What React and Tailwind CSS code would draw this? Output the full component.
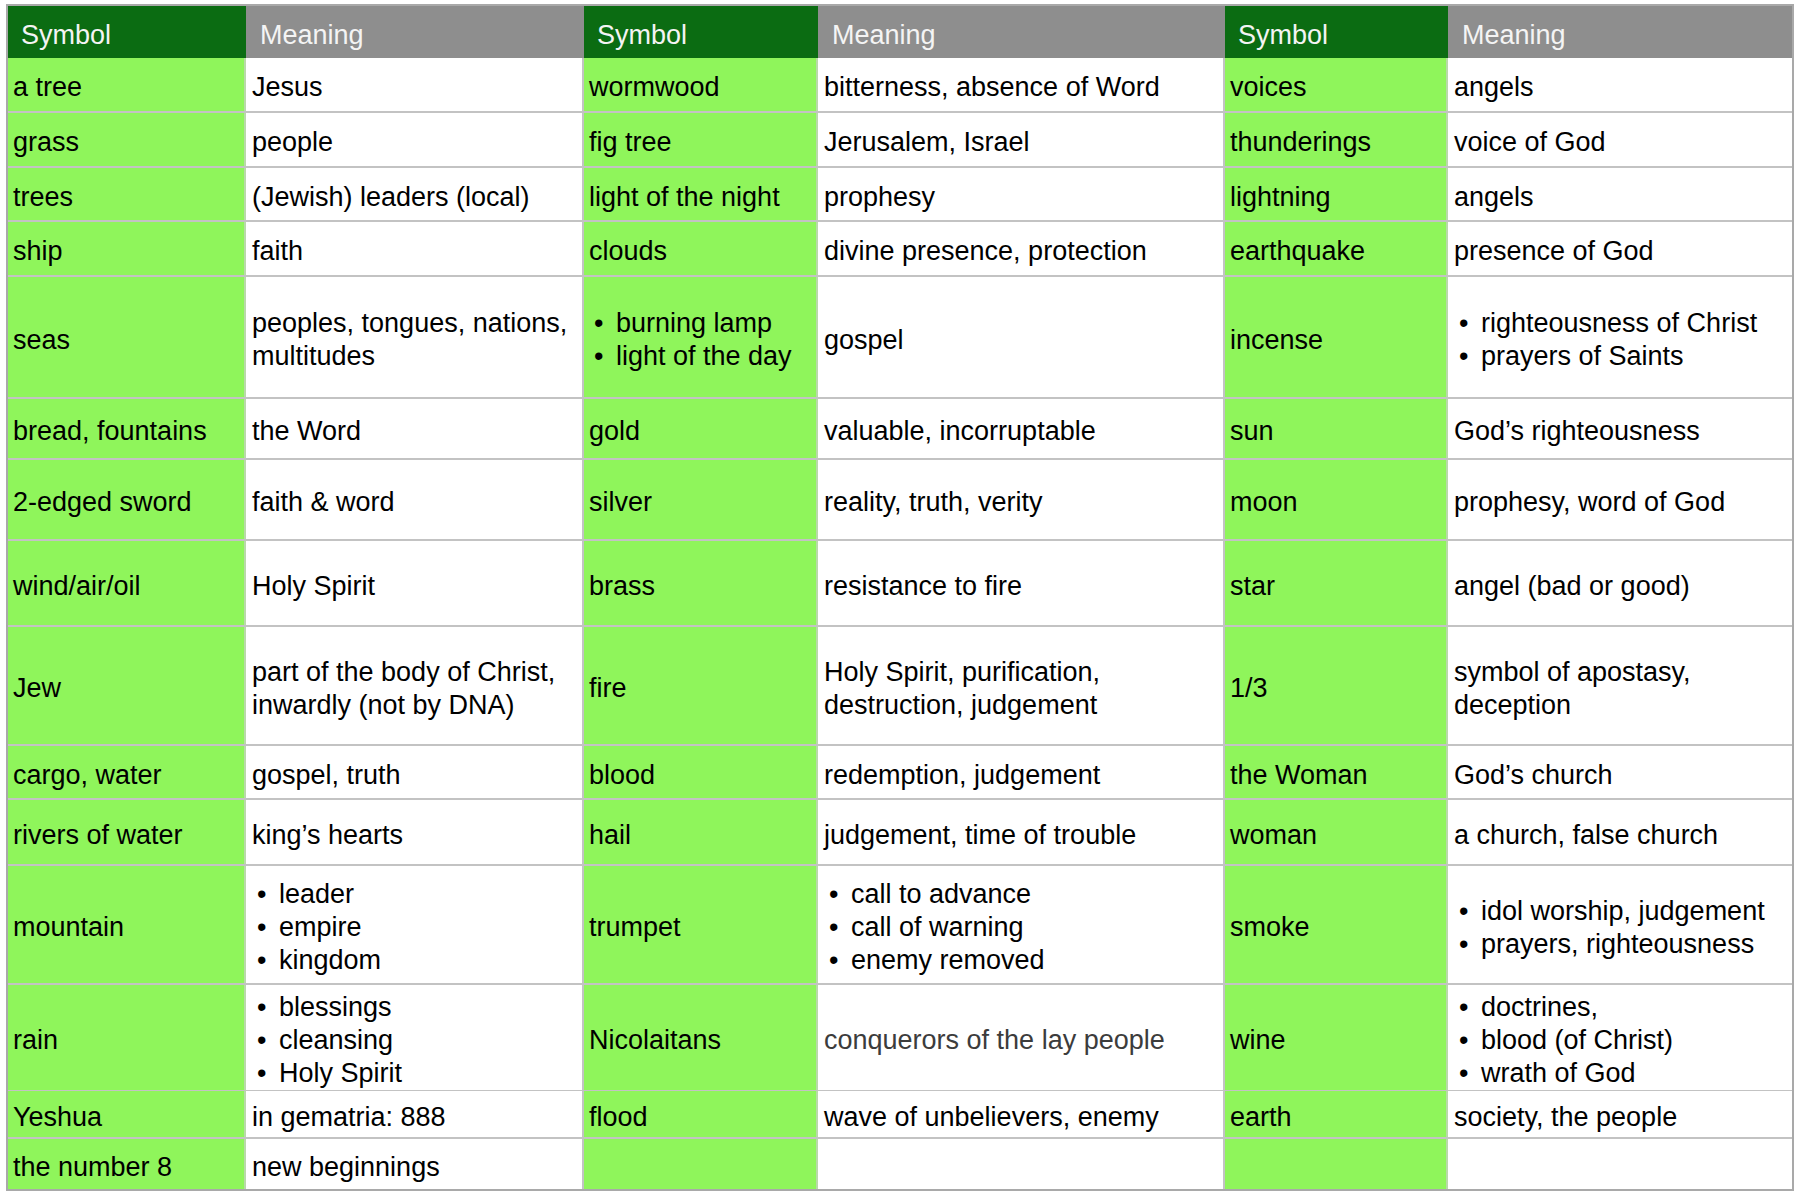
import React from 'react';

const rows = [
  ['h-[55px]', 'a tree', 'Jesus', 'wormwood', 'bitterness, absence of Word', 'voices', 'angels'],
  ['h-[55px]', 'grass', 'people', 'fig tree', 'Jerusalem, Israel', 'thunderings', 'voice of God'],
  ['h-[54px]', 'trees', '(Jewish) leaders (local)', 'light of the night', 'prophesy', 'lightning', 'angels'],
  ['h-[55px]', 'ship', 'faith', 'clouds', 'divine presence, protection', 'earthquake', 'presence of God'],
  ['h-[122px]', 'seas', { lines: ['peoples, tongues, nations,', 'multitudes'] }, { bullets: ['burning lamp', 'light of the day'] }, 'gospel', 'incense', { bullets: ['righteousness of Christ', 'prayers of Saints'] }],
  ['h-[61px]', 'bread, fountains', 'the Word', 'gold', 'valuable, incorruptable', 'sun', 'God\u2019s righteousness'],
  ['h-[81px]', '2-edged sword', 'faith & word', 'silver', 'reality, truth, verity', 'moon', 'prophesy, word of God'],
  ['h-[86px]', 'wind/air/oil', 'Holy Spirit', 'brass', 'resistance to fire', 'star', 'angel (bad or good)'],
  ['h-[119px]', 'Jew', { lines: ['part of the body of Christ,', 'inwardly (not by DNA)'] }, 'fire', { lines: ['Holy Spirit, purification,', 'destruction, judgement'] }, '1/3', { lines: ['symbol of apostasy,', 'deception'] }],
  ['h-[54px]', 'cargo, water', 'gospel, truth', 'blood', 'redemption, judgement', 'the Woman', 'God\u2019s church'],
  ['h-[66px]', 'rivers of water', 'king\u2019s hearts', 'hail', 'judgement, time of trouble', 'woman', 'a church, false church'],
  ['h-[119px]', 'mountain', { bullets: ['leader', 'empire', 'kingdom'] }, 'trumpet', { bullets: ['call to advance', 'call of warning', 'enemy removed'] }, 'smoke', { bullets: ['idol worship, judgement', 'prayers, righteousness'] }],
  ['h-[106px]', 'rain', { bullets: ['blessings', 'cleansing', 'Holy Spirit'] }, 'Nicolaitans', { gray: 'conquerors of the lay people' }, 'wine', { bullets: ['doctrines,', 'blood (of Christ)', 'wrath of God'] }],
  ['h-[48px]', 'Yeshua', 'in gematria: 888', 'flood', 'wave of unbelievers, enemy', 'earth', 'society, the people'],
  ['h-[50px]', 'the number 8', 'new beginnings', '', '', '', ''],
];

function Content({ c }) {
  if (typeof c === 'string') return <span className="whitespace-nowrap">{c}</span>;
  if (c.gray) return <span className="whitespace-nowrap text-[#3c3c3c]">{c.gray}</span>;
  if (c.lines)
    return (
      <div className="flex flex-col">
        {c.lines.map((l, i) => (
          <span key={i} className="whitespace-nowrap">{l}</span>
        ))}
      </div>
    );
  if (c.bullets)
    return (
      <div className="flex flex-col">
        {c.bullets.map((l, i) => (
          <div key={i} className="flex whitespace-nowrap">
            <span className="w-[27px] pl-[5px]">{'\u2022'}</span>
            <span>{l}</span>
          </div>
        ))}
      </div>
    );
  return null;
}

export default function App() {
  return (
    <div className="w-[1800px] h-[1198px] bg-white pt-[4px] pl-[6px]" style={{ fontFamily: '"Liberation Sans", Arial, sans-serif' }}>
      <div className="w-[1788px] border-2 border-[#a9a9a9] text-[27px] leading-[33px] text-black">
        <div className="grid grid-cols-[238px_338px_234px_407px_223px_344px] h-[52px] text-white">
          {['Symbol', 'Meaning', 'Symbol', 'Meaning', 'Symbol', 'Meaning'].map((t, i) => (
            <div
              key={i}
              className={
                i % 2 === 0
                  ? 'flex items-center pl-[13px] pt-[6px] bg-[#0b6c12] text-[#f4f4f4]'
                  : 'flex items-center pl-[14px] pt-[6px] bg-[#8e8e8e] text-[#f4f4f4]'
              }
            >
              {t}
            </div>
          ))}
        </div>
        {rows.map((r, ri) => (
          <div
            key={ri}
            className={
              'grid grid-cols-[238px_338px_234px_407px_223px_344px] ' +
              r[0] +
              (ri < rows.length - 1 ? ' border-b-2 border-[#c3c3c3]' : '')
            }
          >
            {r.slice(1).map((c, ci) => (
              <div
                key={ci}
                className={
                  ci % 2 === 0
                    ? 'flex items-center pl-[5px] pt-[6px] bg-[#8ff55b] border-r-2 border-[#b9d9a9]'
                    : ci === 5
                    ? 'flex items-center pl-[6px] pt-[6px] bg-white'
                    : 'flex items-center pl-[6px] pt-[6px] bg-white border-r-2 border-[#c3c3c3]'
                }
              >
                <Content c={c} />
              </div>
            ))}
          </div>
        ))}
      </div>
    </div>
  );
}
